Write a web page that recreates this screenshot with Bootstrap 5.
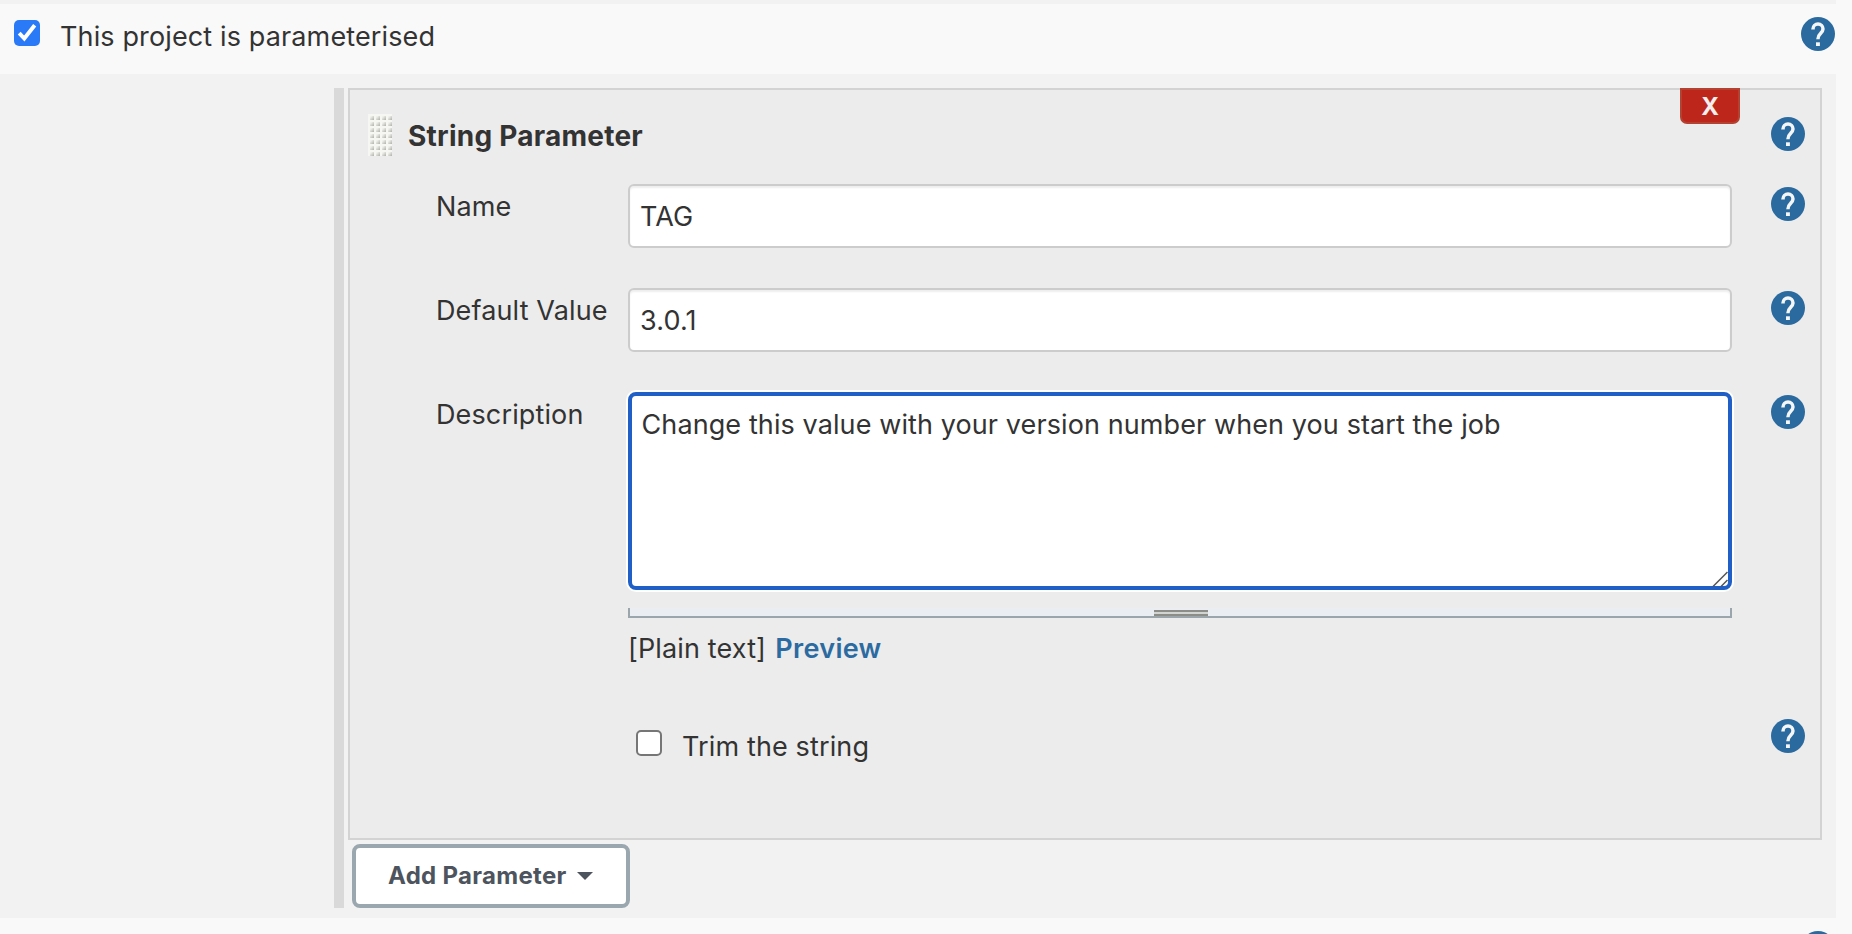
<!DOCTYPE html>
<html lang="en">
<head>
<meta charset="utf-8">
<title>Project configuration</title>
<link href="https://cdn.jsdelivr.net/npm/bootstrap@5.3.0/dist/css/bootstrap.min.css" rel="stylesheet">
<style>
body{background:#f9f9f9;color:#333;font-family:Inter,"Liberation Sans",sans-serif;font-size:27px;line-height:40px;letter-spacing:.13px;height:934px}
.strip{height:4px;width:1836px;background:#f2f2f2}
.head-row{height:70px;width:1836px;padding:12px 1px 0 14px}
.head-row .help{margin-top:1px}
.section{width:1836px;height:844px;background:#f2f2f2;padding:14px 14px 10px 334px}
.rail{width:10px;background:#d9d9d9;margin-right:4px}
.param-box{height:752px;background:#ececec;border:2px solid #d3d3d3}
.help{width:34px;height:34px;display:block;flex:none}
.form-check-input.tick{width:26px;height:26px;margin:4px 20px 0 0;border:2px solid #767676;border-radius:5px;background-color:#fff;flex:none;float:none}
.form-check-input.tick:checked{border:0;background-color:#2a7af8;background-image:none}
.tick-wrap svg{left:0;top:4px;width:26px;height:26px;pointer-events:none}
.tick-text{padding-top:1px}
.title-row{height:94px;padding:24px 15px 0 18px}
.title-row .name{font-size:28px;font-weight:700;letter-spacing:.24px;margin:2px 0 0 16px}
.title-row .help{margin-top:3px}
.grip{width:24px;height:42px;flex:none;display:block}
.del{top:-2px;right:80px;width:60px;height:36px;background:#bd271b;border:2px solid #b34232;border-radius:0 0 7px 7px;color:#f4eeee;font-size:24px;font-weight:700;line-height:33px;padding:0}
.f-row{height:104px;padding-left:86px}
.f-row.tall{height:327px}
.f-row .help{margin:3px 0 0 39px}
.f-row.last .help{margin-top:0}
.lbl{width:192px;padding-top:3px;flex:none;white-space:nowrap}
.fld{width:1104px;flex:none}
.fld .form-control{height:64px;border:2px solid #ccc;border-radius:6px;padding:0 10px;font-size:27px;letter-spacing:.13px;color:#333;background:#fff;box-shadow:inset 0 2px 2px rgba(0,0,0,.07)}
.fld textarea.form-control{height:198px;border:4px solid #1f5fc6;border-radius:8px;padding:9px 9.5px 0;line-height:40px;letter-spacing:.1px;box-shadow:0 0 0 2px #fff;resize:none;display:block}
.corner{right:4px;bottom:3px;width:16px;height:16px}
.resizer{height:10px;margin:18px 0 11px;background:#eaeef2;border:2px solid #9aa6ac;border-top:0}
.resizer span{width:54px;height:6px;margin:2px 0 0 2px;background:#d2d4d4;border-top:2px solid #8b8d86;border-bottom:2px solid #8b8d86}
.add,.add:hover{width:278px;height:64px;margin:4px 0 0 4px;background:#fff;border:4px solid #9ba7ae;border-radius:8px;font-size:24px;font-weight:700;letter-spacing:.3px;color:#4d545d;padding:0 0 0 32px}
.add::after{border-top:8px solid;border-left:8px solid transparent;border-right:8px solid transparent;margin-left:10px;vertical-align:4px}
.prev{color:#2b6ba1;font-weight:600;letter-spacing:.3px;margin-left:1.5px}
.next-row{width:1836px;padding:13px 1px 0 0}
</style>
<script src="https://cdn.jsdelivr.net/npm/bootstrap@5.3.0/dist/js/bootstrap.bundle.min.js"></script>
</head>
<body class="overflow-hidden">
<svg class="d-none">
  <symbol id="q" viewBox="0 0 34 34"><circle cx="17" cy="17" r="17" fill="#2b6a9f"/><path d="M12 12.600v-.6a5 5 0 0 1 10 0c0 2-1.100 3.100-2.500 4.500-1.600 1.500-2.600 2.600-2.600 5.700" fill="none" stroke="#f4f6f8" stroke-width="3.500"/><path d="M15 25.300h3.900v3.700H15z" fill="#f4f6f8"/></symbol>
</svg>

<div class="strip"></div>
<div class="head-row d-flex justify-content-between align-items-start">
  <label class="tick-wrap position-relative d-flex">
    <input class="form-check-input tick" type="checkbox" checked>
    <svg class="position-absolute" viewBox="0 0 26 26"><path d="M5.200 13.200 10.300 18.500 20.700 5.200" fill="none" stroke="#fff" stroke-width="3.900"/></svg>
    <span class="tick-text">This project is parameterised</span>
  </label>
  <svg class="help"><use href="#q"/></svg>
</div>

<div class="section d-flex">
  <div class="rail"></div>
  <div class="flex-grow-1">
    <div class="param-box position-relative">
      <button class="btn del position-absolute" type="button">X</button>
      <div class="title-row d-flex align-items-start">
        <svg class="grip" viewBox="0 0 24 42">
          <defs>
            <linearGradient id="g" x1="0" y1="0" x2="1" y2="1"><stop offset=".2" stop-color="#f0f0ec"/><stop offset=".9" stop-color="#b8b8b3"/></linearGradient>
            <pattern id="d" width="6" height="6" patternUnits="userSpaceOnUse"><rect width="6" height="6" fill="#f6f6f3"/><rect x="2" y="2" width="4" height="4" fill="url(#g)"/></pattern>
          </defs>
          <rect width="24" height="42" fill="url(#d)"/>
        </svg>
        <div class="name">String Parameter</div>
        <svg class="help ms-auto"><use href="#q"/></svg>
      </div>
      <div class="f-row d-flex align-items-start">
        <label class="lbl">Name</label>
        <div class="fld"><input class="form-control" type="text" value="TAG"></div>
        <svg class="help"><use href="#q"/></svg>
      </div>
      <div class="f-row d-flex align-items-start">
        <label class="lbl">Default Value</label>
        <div class="fld"><input class="form-control" type="text" value="3.0.1"></div>
        <svg class="help"><use href="#q"/></svg>
      </div>
      <div class="f-row tall d-flex align-items-start">
        <label class="lbl">Description</label>
        <div class="fld">
          <div class="position-relative">
            <textarea class="form-control">Change this value with your version number when you start the job</textarea>
            <svg class="corner position-absolute" viewBox="0 0 16 16"><path d="M1 15.500 15.500 1M9 15.500 15.500 9" stroke="#555" stroke-width="1.500"/></svg>
          </div>
          <div class="resizer d-flex justify-content-center"><span></span></div>
          <div><span>[Plain text]</span> <a class="prev text-decoration-none" href="#">Preview</a></div>
        </div>
        <svg class="help"><use href="#q"/></svg>
      </div>
      <div class="f-row last d-flex align-items-start">
        <div class="lbl"></div>
        <div class="fld ps-2">
          <label class="d-flex mt-2 pt-0">
            <input class="form-check-input tick mt-1" type="checkbox" style="transform:translateY(-1px)">
            <span>Trim the string</span>
          </label>
        </div>
        <svg class="help"><use href="#q"/></svg>
      </div>
    </div>
    <button class="btn add dropdown-toggle d-block text-start" type="button">Add Parameter</button>
  </div>
</div>
<div class="next-row d-flex justify-content-end"><svg class="help"><use href="#q"/></svg></div>
</body>
</html>
